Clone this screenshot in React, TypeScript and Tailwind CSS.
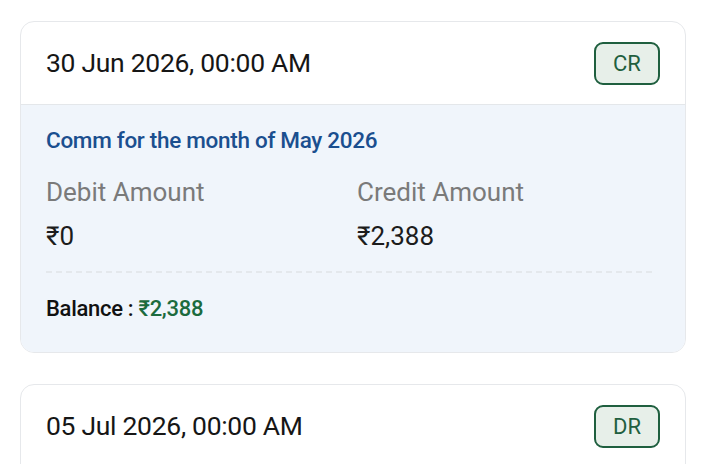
const entries = [
  {
    date: '30 Jun 2026, 00:00 AM',
    type: 'CR',
    note: 'Comm for the month of May 2026',
    debit: '₹0',
    credit: '₹2,388',
    balance: '₹2,388',
  },
  {
    date: '05 Jul 2026, 00:00 AM',
    type: 'DR',
    note: 'Payout',
    debit: '₹2,388',
    credit: '₹0',
    balance: '₹0',
  },
];

export default function App() {
  return (
    <div
      className="min-h-screen bg-white px-[20px] pt-[21px] flex flex-col gap-[31px]"
      style={{ fontFamily: 'Roboto, "Liberation Sans", sans-serif' }}
    >
      {entries.map((e) => (
        <div
          key={e.date}
          className="rounded-[14px] border border-[#e6e8eb] bg-white overflow-hidden shrink-0"
        >
          {/* Header */}
          <div className="flex items-center justify-between pl-[25px] pr-[25px] h-[83px] border-b border-[#e4e7ea]">
            <span className="text-[26.5px] leading-[32px] text-[#161616] tracking-[-0.3px]">{e.date}</span>
            <span className="w-[66px] h-[43px] flex items-center justify-center rounded-[9px] border-2 border-[#1f5f3f] bg-[#e7efe9] text-[22px] text-[#1f5f3f]">
              {e.type}
            </span>
          </div>

          {/* Body */}
          <div className="bg-[#f0f5fb] px-[25px] pt-[21px] pb-[29px]">
            <div className="text-[22.5px] leading-[28px] text-[#1b4f8f] font-medium tracking-[-0.3px]">{e.note}</div>
            <div className="grid grid-cols-2 mt-[22px] mr-[8px]">
              <div>
                <div className="text-[26px] leading-[32px] text-[#7a7a7a]">Debit Amount</div>
                <div className="text-[26px] leading-[32px] text-[#1c1c1c] mt-[12px]">{e.debit}</div>
              </div>
              <div className="pl-[8px]">
                <div className="text-[26px] leading-[32px] text-[#7a7a7a]">Credit Amount</div>
                <div className="text-[26px] leading-[32px] text-[#1c1c1c] mt-[12px]">{e.credit}</div>
              </div>
            </div>
            <div className="border-t-2 border-dashed border-[#e4e8ec] mt-[19px] mr-[8px]" />
            <div className="mt-[22px] text-[22px] leading-[28px] font-medium text-[#111] tracking-[-0.3px]">
              Balance : <span className="text-[#1c6b3e]">{e.balance}</span>
            </div>
          </div>
        </div>
      ))}
    </div>
  );
}
